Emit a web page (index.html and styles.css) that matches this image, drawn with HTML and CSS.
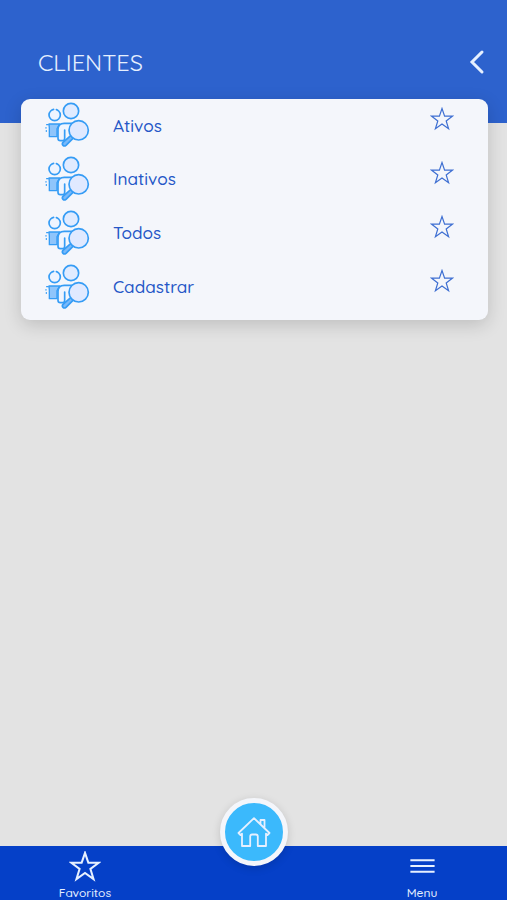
FILE: index.html
```html
<!DOCTYPE html>
<html lang="pt-BR">
<head>
  <meta charset="UTF-8" />
  <meta name="viewport" content="width=device-width, initial-scale=1" />
  <title>Clientes</title>
  <link rel="stylesheet" href="styles.css">
</head>
<body>
<!-- Shared icons -->
<svg class="icon-defs" width="0" height="0">
  <symbol id="icon-clients" viewBox="0 0 180 162">
    <g fill="none" stroke="#359cf5" stroke-width="5" stroke-linecap="round" stroke-linejoin="round">
      <path d="M39 78h32l-8 14v24H40V90z" fill="#8fc5fb" stroke-width="4" />
      <path d="M32 80h5M30 89v1M31 98v2" stroke-width="4" />
      <circle cx="56" cy="51" r="17" fill="#eef4ff" stroke-dasharray="88 8 6 6" transform="rotate(-45 56 51)" />
      <circle cx="105" cy="39" r="23" fill="#e0ebff" />
      <path d="M66 121V94q0-18 19-18h30M66 121q0 7 7 7h7q6 0 6-7V96" fill="#eff5ff" />
      <path d="M104 113l-23 20q-4 5 0 9t9 0l24-24z" fill="#79b9fa" />
      <circle cx="128" cy="97" r="29" fill="#e0e9ff" />
    </g>
  </symbol>
  <symbol id="icon-star" viewBox="0 0 24 24">
    <path d="M12 1.500l2.600 7.600h8l-6.400 4.800 2.400 7.800L12 17l-6.600 4.700 2.400-7.800L1.400 9.100h8z" fill="none" stroke="currentColor" />
  </symbol>
</svg>

<header class="page-header">
  <h1 class="page-title">CLIENTES</h1>
  <a class="back-btn" href="#" aria-label="Voltar">
    <svg width="16" height="26" viewBox="0 0 16 26"><path d="M13 3L3 13l10 10" fill="none" stroke="currentColor" stroke-width="3" stroke-linecap="round" /></svg>
  </a>
</header>

<main class="menu-card">
  <div class="menu-row">
    <svg class="client-icon"><use href="#icon-clients" /></svg>
    <span class="menu-label">Ativos</span>
    <svg class="row-star"><use href="#icon-star" /></svg>
  </div>
  <div class="menu-row">
    <svg class="client-icon"><use href="#icon-clients" /></svg>
    <span class="menu-label">Inativos</span>
    <svg class="row-star"><use href="#icon-star" /></svg>
  </div>
  <div class="menu-row">
    <svg class="client-icon"><use href="#icon-clients" /></svg>
    <span class="menu-label">Todos</span>
    <svg class="row-star"><use href="#icon-star" /></svg>
  </div>
  <div class="menu-row">
    <svg class="client-icon"><use href="#icon-clients" /></svg>
    <span class="menu-label">Cadastrar</span>
    <svg class="row-star"><use href="#icon-star" /></svg>
  </div>
</main>

<nav class="bottom-nav">
  <a class="nav-item" href="#">
    <svg class="nav-star"><use href="#icon-star" /></svg>
    <span class="nav-label">Favoritos</span>
  </a>
  <a class="nav-item" href="#">
    <svg class="nav-menu" viewBox="0 0 32 32"><path d="M4 9.500h25M4 15.500h25M4 21.500h25" stroke="currentColor" stroke-width="2" /></svg>
    <span class="nav-label">Menu</span>
  </a>
  <a class="home-btn" href="#" aria-label="Início">
    <svg width="34" height="32" viewBox="0 0 34 32">
      <path d="M1.500 17L17 2.200 32.500 17l-2 2-1.500-1.300V30h-8.200V20.500q0-2-2-2h-3.600q-2 0-2 2V30H5V17.700L3.500 19zM23.500 8V4h4v8" fill="none" stroke="currentColor" stroke-width="1.800" stroke-linejoin="round" />
    </svg>
  </a>
</nav>
</body>
</html>
```

FILE: styles.css
```css
body, html {
  margin: 0;
  padding: 0;
  height: 100%;
}
body {
  display: flex;
  flex-direction: column;
  background: #e3e3e3;
  font-family: Quicksand, Lato, sans-serif;
  overflow: hidden;
}
a {
  color: inherit;
  text-decoration: none;
}
.icon-defs {
  position: absolute;
}
.page-header {
  display: flex;
  flex-shrink: 0;
  align-items: center;
  justify-content: space-between;
  box-sizing: border-box;
  height: 123px;
  padding: 0 22px 0 38px;
  background: #2d62cd;
  color: #e6f0ff;
}
.page-title {
  margin: 0;
  font-size: 23.500px;
  font-weight: 450;
}
.back-btn {
  display: flex;
}
.menu-card {
  z-index: 1;
  margin: -24.500px 19.500px 0 20.500px;
  padding-bottom: 6.500px;
  border-radius: 9px;
  background: #f4f6fb;
  box-shadow: 0 5px 18px rgba(0, 0, 0, 0.16);
}
.menu-row {
  display: flex;
  align-items: center;
  height: 53.750px;
  padding: 0 34px 0 15.500px;
}
.client-icon {
  width: 60px;
  height: 54px;
}
.menu-label {
  flex: 1;
  margin-left: 17px;
  padding-bottom: 0.500px;
  color: #2557c7;
  font-size: 17.200px;
  font-weight: 500;
}
.row-star {
  width: 24px;
  height: 24px;
  margin-bottom: 12px;
  color: #3e6fd2;
  stroke-width: 1.200px;
}
.bottom-nav {
  position: relative;
  display: flex;
  justify-content: space-between;
  height: 54px;
  margin-top: auto;
  background: #0540c8;
  color: #e6f0ff;
}
.nav-item {
  display: flex;
  flex-direction: column;
  align-items: center;
  width: 170px;
  padding-top: 5px;
}
.nav-star, .nav-menu {
  width: 32px;
  height: 32px;
}
.nav-star {
  stroke-width: 1.600px;
}
.nav-label {
  margin-top: 4px;
  font-size: 12px;
  font-weight: 500;
  line-height: 14px;
}
/* Home button overlaps the top edge of the bar */
.home-btn {
  position: absolute;
  top: -48px;
  left: 50%;
  display: flex;
  align-items: center;
  justify-content: center;
  box-sizing: border-box;
  width: 68px;
  height: 68px;
  border: 5px solid #f4f6fb;
  border-radius: 50%;
  background: #3bb9fc;
  box-shadow: 0 2px 8px rgba(0, 0, 0, 0.15);
  transform: translateX(-50%);
}
```
